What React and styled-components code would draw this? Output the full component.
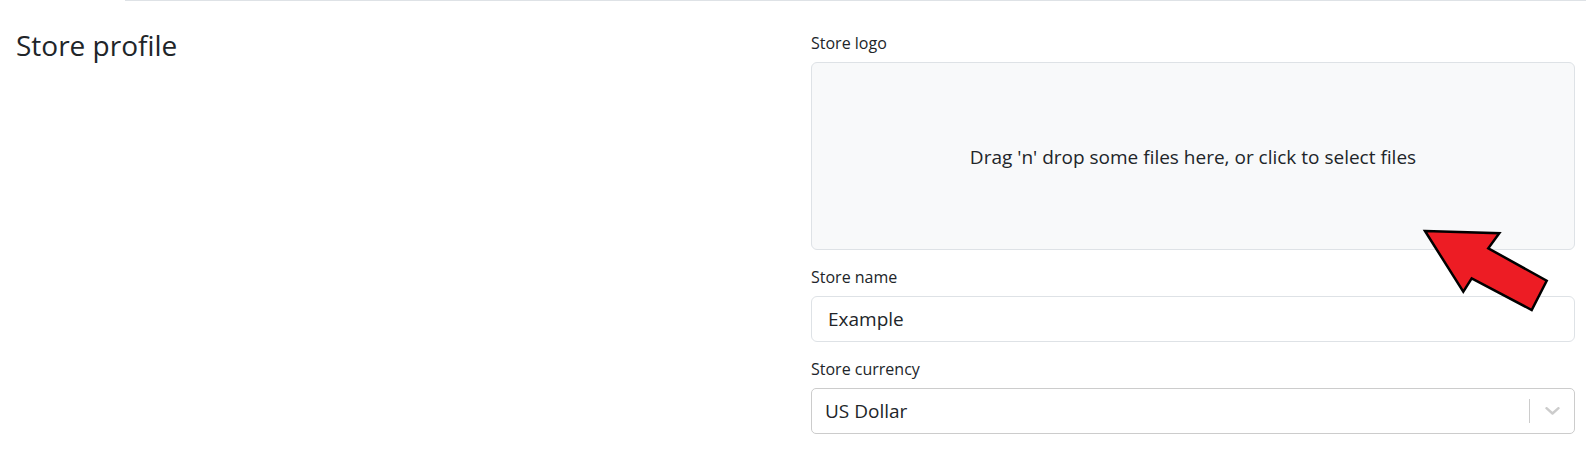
import React from "react";
import styled, { createGlobalStyle } from "styled-components";

const GlobalStyle = createGlobalStyle`
  html, body {
    margin: 0;
    padding: 0;
    background: #ffffff;
  }
  body {
    font-family: "Open Sans", "Noto Sans", sans-serif;
    color: #212529;
    -webkit-font-smoothing: antialiased;
  }
  * { box-sizing: border-box; }
`;

const Page = styled.div`
  position: relative;
  width: 1586px;
  height: 460px;
  overflow: hidden;
  background: #ffffff;
`;

const TopRule = styled.div`
  margin-left: 125px;
  border-top: 1px solid #dee2e6;
`;

const Section = styled.section`
  display: grid;
  grid-template-columns: 795px 1fr;
  padding: 29px 11px 0 16px;
`;

const Title = styled.h3`
  margin: 0;
  font-size: 28px;
  font-weight: 400;
  line-height: 1;
  padding-top: 1px;
  color: #212529;
  align-self: start;
`;

const Form = styled.div`
  display: flex;
  flex-direction: column;
  gap: 15px;
  padding-top: 1px;
`;

const Field = styled.div`
  display: flex;
  flex-direction: column;
`;

const Label = styled.label`
  font-size: 16px;
  line-height: 24px;
  margin-bottom: 7px;
  color: #212529;
`;

const Dropzone = styled.div`
  height: 188px;
  border: 1px solid #dee2e6;
  border-radius: 6px;
  background: #f8f9fa;
  display: flex;
  align-items: center;
  justify-content: center;
  font-size: 19px;
  line-height: 28px;
  padding-top: 1px;
  color: #212529;
  cursor: pointer;
`;

const TextInput = styled.input`
  height: 46px;
  width: 100%;
  border: 1px solid #dee2e6;
  border-radius: 6px;
  padding: 0 16px;
  font-family: "Open Sans", "Noto Sans", sans-serif;
  font-size: 19px;
  color: #212529;
  background: #ffffff;
  outline: none;
`;

const SelectBox = styled.div`
  height: 46px;
  border: 1px solid #cccccc;
  border-radius: 5px;
  display: flex;
  align-items: center;
  background: #ffffff;
`;

const SelectValue = styled.div`
  flex: 1;
  padding-left: 13px;
  font-size: 19px;
  color: #212529;
`;

const Separator = styled.span`
  align-self: stretch;
  width: 1px;
  margin: 10px 0;
  background: #cccccc;
`;

const Indicator = styled.div`
  width: 44px;
  display: flex;
  align-items: center;
  justify-content: center;
  color: #cccccc;
`;

const ArrowOverlay = styled.svg`
  position: absolute;
  left: 1420px;
  top: 226px;
  width: 135px;
  height: 92px;
  overflow: visible;
`;

export default function App() {
  return (
    <>
      <GlobalStyle />
      <Page>
        <TopRule />
        <Section>
          <Title>Store profile</Title>
          <Form>
            <Field>
              <Label>Store logo</Label>
              <Dropzone>Drag 'n' drop some files here, or click to select files</Dropzone>
            </Field>
            <Field>
              <Label>Store name</Label>
              <TextInput defaultValue="Example" readOnly />
            </Field>
            <Field>
              <Label>Store currency</Label>
              <SelectBox>
                <SelectValue>US Dollar</SelectValue>
                <Separator />
                <Indicator>
                  <svg width="15" height="8" viewBox="0 0 15 8">
                    <polyline
                      points="1.5,1.2 7.5,6.5 13.5,1.2"
                      fill="none"
                      stroke="currentColor"
                      strokeWidth="2.4"
                      strokeLinecap="round"
                      strokeLinejoin="round"
                    />
                  </svg>
                </Indicator>
              </SelectBox>
            </Field>
          </Form>
        </Section>
        <ArrowOverlay viewBox="0 0 135 92">
          <polygon
            points="5,5 79.3,7.3 68.3,22.3 126.7,54.7 111.7,84 51.7,52.3 43.3,65.7"
            fill="#ed1c24"
            stroke="#000000"
            strokeWidth="2.5"
            strokeLinejoin="miter"
          />
        </ArrowOverlay>
      </Page>
    </>
  );
}
